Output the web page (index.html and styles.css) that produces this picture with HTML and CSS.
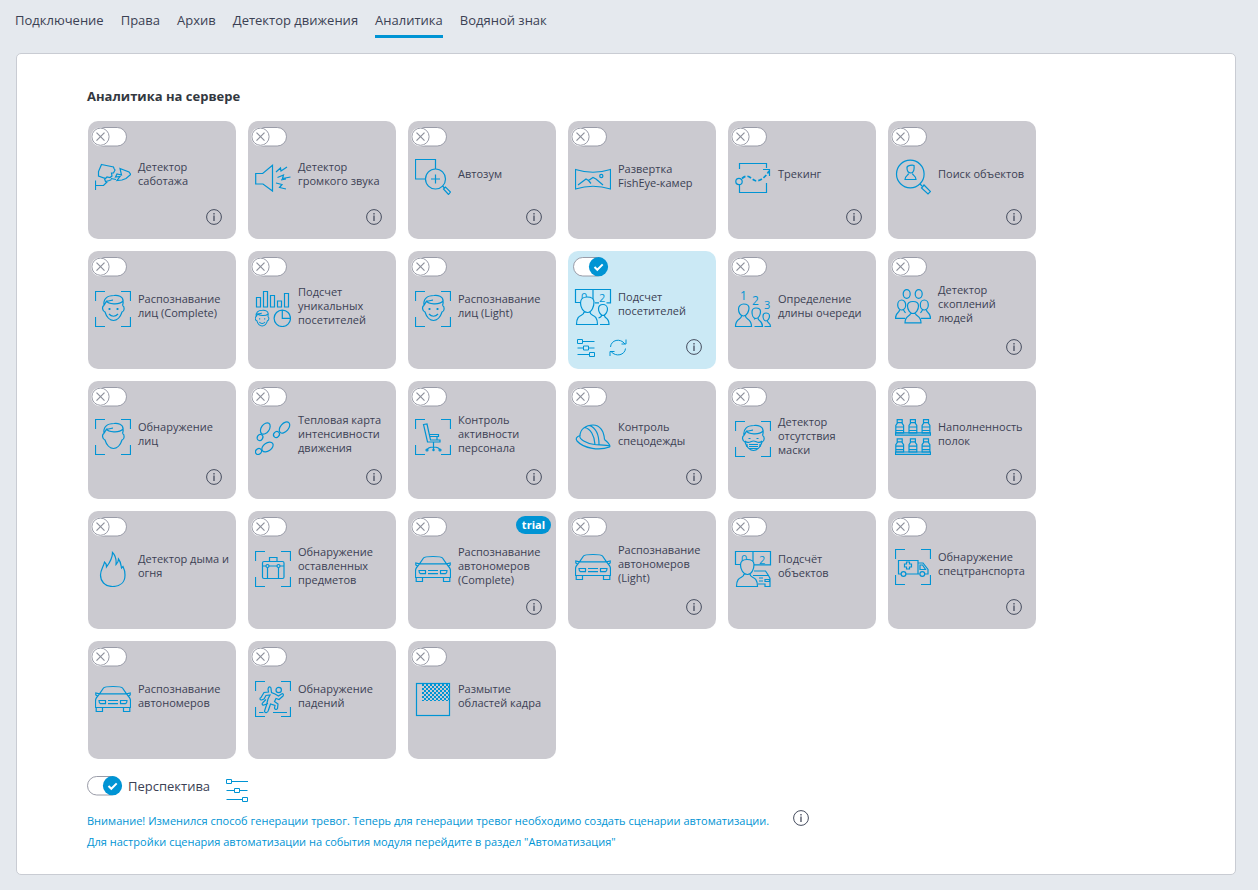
FILE: index.html
```html
<!DOCTYPE html>
<html lang="ru">
<head>
<meta charset="utf-8">
<meta name="viewport" content="width=device-width, initial-scale=1">
<title>Аналитика</title>
<link rel="stylesheet" href="styles.css">
</head>
<body>
<svg class="sprite" aria-hidden="true">
  <defs>
    <pattern id="checker" width="4" height="4" patternUnits="userSpaceOnUse" x="7" y="3">
      <path d="M0 0h2v2H0zM2 2h2v2H2z" fill="#0094d4" stroke="none"/>
    </pattern>
    <g id="corners"><path d="M.5 10V.5H10M26 .5h9.500V10M35.500 26v9.500H26M10 35.500H.5V26"/></g>
    <g id="hair"><path d="M9 14.500C8 8 12 4.500 19 4.500c4-.5 9 1 9 5 .5 2 0 3.500-.5 5M9 14.500l2.500-4.500c3.500 0 5-1 6.500-.8M11.500 10c1.500 3 12.500 4.500 16.500 0"/></g>
    <g id="jaw"><path d="M9 14.500c-2.500 1-1.500 6 1 6.500 1.500 5 5 8.500 8.500 8.500S25.500 26 27 21c2.500-.5 3-5.500.5-6.500"/></g>
    <g id="face"><use href="#hair"/><use href="#jaw"/><path d="M14.500 17v2M22.500 17v2" stroke-width="1.800"/><path d="M14 23c2.500 3 6.500 3 9 0"/></g>
  </defs>
  <symbol id="off" viewBox="0 0 38 20">
    <rect x="1.500" y=".5" width="34" height="18.500" rx="9.250" fill="#fff" stroke="#9a9ca8"/>
    <circle cx="9.500" cy="9.700" r="9.500" fill="#fff"/>
    <circle cx="9.500" cy="9.700" r="8.600" fill="#fff" stroke="#9a9ca8"/>
    <path d="M5.500 5.700l8 8M13.500 5.700l-8 8" stroke="#8d909c" stroke-width="1.200"/>
  </symbol>
  <symbol id="on" viewBox="0 0 38 20">
    <rect x="2.500" y=".5" width="33" height="18.500" rx="9.250" fill="#fff" stroke="#9a9ca8"/>
    <circle cx="27.500" cy="9.700" r="9.600" fill="#0094d4"/>
    <path d="M23.500 10l2.800 2.800 5.400-5.400" fill="none" stroke="#fff" stroke-width="2"/>
  </symbol>
  <symbol id="info" viewBox="0 0 16 16"><circle cx="8" cy="8" r="7.400"/><path d="M8 6.500V12M8 4v1.500" stroke-width="1.300"/></symbol>
  <symbol id="sliders" viewBox="0 0 18 18"><path d="M5.500 3.500H17.500M.5 10H6.500M11.500 10H17.500M.5 16.500h12M.5 1.500h5v4h-5zM6.500 8h5v4h-5zM12.500 14.500h5v4h-5z"/></symbol>
  <symbol id="sliders-large" viewBox="0 0 24 24"><path d="M6.500 3.500H23M1.500 12.500H9.500M14.500 12.500H22.500M1.500 21.500H17.500M1.500 1.500h5v4h-5zM9.500 10.500h5v4h-5zM17.500 19.500h5v4h-5z"/></symbol>
  <symbol id="refresh" viewBox="0 0 18 18"><path d="M1.500 9C2 2 11-.5 16 6M17 1.500V6H12.500M16.500 10.500C16 17 7 19.500 2 13.500M1 18v-4.500H5.500"/></symbol>

  <symbol id="sabotage" viewBox="0 0 36 36"><path d="M6.500 5.500L18.500 8l.5 1.500 1 1.500-1.500 3h-2l.5 3-2 1.500-3-.5-1.500 1.500L3.500 17V12.500zM25 9.500L34 13l1.700 2.500L31 19.500l-4 1.500-5 .5 3-4-4.500.5 1.500-3 4.500 1zM.5 21.500V31M.5 26.500h8l4-4M9 18.500l1.500 4 4-1 2-1M16 19.500l5 1"/></symbol>
  <symbol id="loud" viewBox="0 0 36 36"><path d="M.7 14.500h7l9.800-8.200V32L8 25H.7zM21 13l4.500-4 .5 3 6-4M22.500 18.500l6-2.500-1 3.500 8-1.500M21 24l6 1.500-2.500 3 6.500 1.500M26 21l5-1"/></symbol>
  <symbol id="autozoom" viewBox="0 0 36 36"><path d="M10.500 20H.5V.5h20V10"/><circle cx="20.500" cy="20" r="10"/><path d="M20.500 15.500v9M16 20h9M27.500 27l2 2M28.500 30l2-2 5 5-2 2.500z"/></symbol>
  <symbol id="fisheye" viewBox="0 0 36 36"><path d="M.5 8.500Q18 14 35.500 8.500V28Q18 22.500.5 28zM3 24l8-6 2.500 1.500L18 16.500l3 1.500 7 6M13.500 19.500l2.500 3"/><circle cx="26.300" cy="15" r="1.600"/></symbol>
  <symbol id="tracking" viewBox="0 0 36 36"><path d="M4.500 10V4.500h27V9M4.500 26v7.500h27V24"/><circle cx="4" cy="22.500" r="3.200"/><path d="M7 19.500C13 14 16 20 20 21.500S30 19 34 12" stroke-dasharray="4 2" stroke-width="1.700"/><path d="M28 10.500h6.500V17"/></symbol>
  <symbol id="search" viewBox="0 0 36 36"><circle cx="15.300" cy="15" r="13.800"/><path d="M25 25l2 2M26.500 29l2.500-3 6.500 6.500-2.500 2.500zM12 9c-.5-3 6-3 7-2.500.5 4-.5 7.500-3 7.500S12 12 12 9zM13.500 14.500c0 2-3.500 2-3.500 6h11c0-4-3.500-4-3.500-6"/></symbol>
  <symbol id="recognition" viewBox="0 0 36 36"><use href="#corners"/><use href="#face"/></symbol>
  <symbol id="unique" viewBox="0 0 36 36"><path d="M1.500 6.500H5.500v9.500H1.500zM8.500.5h4v15.500h-4zM15.500 4.500h4v11.500h-4zM22.500 10h4v6h-4zM29.500 2.500h4v13.500h-4z"/><circle cx="27.300" cy="27.300" r="8.200"/><path d="M27.300 19v8.300h8.200"/><g transform="translate(-4.500 16.500) scale(.63)" stroke-width="1.600"><use href="#face"/></g></symbol>
  <symbol id="crowd" viewBox="0 0 36 36"><ellipse cx="11.700" cy="5" rx="3.500" ry="4.300"/><ellipse cx="23.700" cy="5" rx="3.500" ry="4.300"/><ellipse cx="6.700" cy="16" rx="4" ry="5"/><ellipse cx="29.300" cy="16" rx="4" ry="5"/><path d="M12.500 17c0-3 2.500-4.500 5.500-4.500s5.500 1 5.500 4.500-2.500 7.500-5.500 7.500-5.500-4-5.500-7.500zM15.500 24.500c0 3-5.500 1.500-5.500 9.300h16c0-7.800-5.500-6.300-5.500-9.300M4.500 21c0 3-4 2-4 8.300H10M31.500 21c0 3 4 2 4 8.300H26M8.500 21l2 3M27.500 21l-2 3"/></symbol>
  <symbol id="detection" viewBox="0 0 36 36"><use href="#corners"/><use href="#hair"/><use href="#jaw"/></symbol>
  <symbol id="steps" viewBox="0 0 36 36"><ellipse cx="10.300" cy="9.500" rx="4" ry="6.300" transform="rotate(35 10.300 9.500)"/><ellipse cx="5" cy="18.500" rx="2.700" ry="3.200" transform="rotate(35 5 18.500)"/><ellipse cx="29.500" cy="8.500" rx="4" ry="6.500" transform="rotate(42 29.500 8.500)"/><ellipse cx="21.500" cy="15.500" rx="2.700" ry="3.200" transform="rotate(42 21.500 15.500)"/><ellipse cx="12.500" cy="28" rx="4" ry="6.300" transform="rotate(55 12.500 28)"/><ellipse cx="3.500" cy="32.500" rx="2.700" ry="3.200" transform="rotate(55 3.500 32.500)"/></symbol>
  <symbol id="staff" viewBox="0 0 36 36"><use href="#corners"/><path d="M8.500 5.500L12 5l3.500 16H25v2H12.500zM14 15.500h9.500v2H14.500M22 17.500V21M18.500 23v5M12 31c1-3 4-3 6.500-3s5.500 0 6.500 3M18.500 28v3"/><circle cx="12" cy="31" r="1"/><circle cx="18.500" cy="31" r=".6"/><circle cx="25" cy="31" r="1"/></symbol>
  <symbol id="helmet" viewBox="0 0 36 36"><path d="M5 17C5 10 11 6 18 6s11 6 11.500 14.500M5 16.500C1 18 .5 20 2 22c7 8 23 9.500 32.500 6 1-.5.5-3-5-7.500M5 17c-1 3 6 7.500 14.500 8.500 4 .5 12 .5 15 1.500M9.500 8.500c6 1 10 8 10.500 17M14.500 6.500C20 8.500 24 15 24 25.500"/></symbol>
  <symbol id="mask" viewBox="0 0 36 36"><use href="#corners"/><use href="#hair"/><use href="#jaw"/><path d="M10 20c3.500 3.500 5.500 0 8.500 0s5 3.500 8.500 0M14 23.500h9M14 25.500h9M14 27.500h9M13.500 17.500H15.500M21.500 17.500h2M12 23v3M25 23v3"/></symbol>
  <symbol id="shelves" viewBox="0 0 36 36"><g id="shelf"><g id="bottle"><path d="M2.200.7h5v3h-5zM2.700 3.700L.8 6.500v7.300h7.800V6.500L6.700 3.700M.8 8h7.800M.8 11.500h7.800"/></g><use href="#bottle" x="13.200"/><use href="#bottle" x="26.300"/><path d="M.5 13.800h35v2.400H.5z"/></g><use href="#shelf" y="19.200"/></symbol>
  <symbol id="fire" viewBox="0 0 36 36"><path d="M17.500 35.500C9.500 35.500 5.500 30 5.500 24c0-5 3-8 4-13 1.500 1 2 3 2 5 3-4 6-8 6-14.500 3 3 4 7 3.500 12 1.500-1.500 2.500-3 2.500-5.500 2.500 3 2.500 6 3 9l1.500-1.500c1.500 3 2 6 2 8.500 0 7-4.500 11.500-12.500 11.500z"/></symbol>
  <symbol id="luggage" viewBox="0 0 36 36"><use href="#corners"/><rect x="7.500" y="10.500" width="21.500" height="17" rx="1.500"/><path d="M14.500 10.500v-4h7.500v4M7.500 15h3.500M14 15h8M25 15h4M12.500 16.500v11M23.500 16.500v11"/><circle cx="12.500" cy="15" r="1.500"/><circle cx="23.500" cy="15" r="1.500"/></symbol>
  <symbol id="car" viewBox="0 0 36 36"><path d="M4.500 12.800L8.500 7Q9.500 5.500 18 5.500T27.500 7L31.500 12.800M4.500 12.800L.8 12v2l1.700 1M31.500 12.800l3.700-.8v2l-1.700 1M4.500 12.800h27L34 16q1.500 1.500 1.500 4v6.500H.5V20q0-2.500 1.500-4zM1.200 26.500v4h6.300v-4M28.500 26.500v4h6.300v-4M13 19.500h10M13 22.700h10M4 19.500h6.500v3.200H5.500Q4 22 4 19.500zM32 19.500h-6.500v3.200h5Q32 22 32 19.500z"/></symbol>
  <symbol id="ambulance" viewBox="0 0 36 36"><use href="#corners"/><path d="M6 25H3.500V11.500H23V25H11M23 14h5l5 6.500V25h-3M23 25h1.500M25 16h2.500l3 4.500H25zM11.500 13h3v2h2v3h-2v2h-3v-2h-2v-3h2z"/><circle cx="8.500" cy="25" r="2.400"/><circle cx="27.300" cy="25" r="2.400"/></symbol>
  <symbol id="fall" viewBox="0 0 36 36"><use href="#corners"/><circle cx="23.700" cy="9" r="2.700"/><path d="M13.500 6.500c1-1 2.500-.5 2.500 1l.5 4 3.500 1.500 3.500 2 3-2c1.500-1 2.500.5 1.500 2l-4 3.500-3-1-1.500 3 3.500 2.500-.5 4.500c-1 1.500-3 1-3-.5l.5-2.500-4.500-1.500-2 6c-.5 3-4 3.500-4 1l2-6 1.500-6 2-4-4 .5-2 3.500-2.500 1c-2 0-2-2-.5-2.500l3-5 4.500-.5-.5-3zM11 18.500l-3 3c-1.500 1-1 3 1 2.500l4-1.500M4 31.500h4.500M18 31.500h14"/></symbol>
  <symbol id="blur" viewBox="0 0 36 36"><rect x="1.500" y="2.500" width="33" height="32"/><rect x="7" y="3" width="27" height="17" fill="url(#checker)" stroke="none"/></symbol>
</svg>

<nav class="tabs">
  <a class="tab" href="#">Подключение</a>
  <a class="tab" href="#">Права</a>
  <a class="tab" href="#">Архив</a>
  <a class="tab" href="#">Детектор движения</a>
  <a class="tab tab-current" href="#" aria-current="page">Аналитика</a>
  <a class="tab" href="#">Водяной знак</a>
</nav>

<main class="panel">
  <h1 class="title">Аналитика на сервере</h1>
  <div class="tiles">
    <section class="tile"><label class="switch"><input type="checkbox" aria-labelledby="t1"><svg><use href="#off"/></svg></label><div class="body"><svg class="icon"><use href="#sabotage"/></svg><span class="name" id="t1">Детектор<br>саботажа</span></div><div class="tools"><button class="info" aria-label="Справка"><svg><use href="#info"/></svg></button></div></section>
    <section class="tile"><label class="switch"><input type="checkbox" aria-labelledby="t2"><svg><use href="#off"/></svg></label><div class="body"><svg class="icon"><use href="#loud"/></svg><span class="name" id="t2">Детектор<br>громкого звука</span></div><div class="tools"><button class="info" aria-label="Справка"><svg><use href="#info"/></svg></button></div></section>
    <section class="tile"><label class="switch"><input type="checkbox" aria-labelledby="t3"><svg><use href="#off"/></svg></label><div class="body"><svg class="icon"><use href="#autozoom"/></svg><span class="name" id="t3">Автозум</span></div><div class="tools"><button class="info" aria-label="Справка"><svg><use href="#info"/></svg></button></div></section>
    <section class="tile tile-low"><label class="switch"><input type="checkbox" aria-labelledby="t4"><svg><use href="#off"/></svg></label><div class="body"><svg class="icon"><use href="#fisheye"/></svg><span class="name" id="t4">Развертка<br>FishEye-камер</span></div></section>
    <section class="tile"><label class="switch"><input type="checkbox" aria-labelledby="t5"><svg><use href="#off"/></svg></label><div class="body"><svg class="icon"><use href="#tracking"/></svg><span class="name" id="t5">Трекинг</span></div><div class="tools"><button class="info" aria-label="Справка"><svg><use href="#info"/></svg></button></div></section>
    <section class="tile"><label class="switch"><input type="checkbox" aria-labelledby="t6"><svg><use href="#off"/></svg></label><div class="body"><svg class="icon"><use href="#search"/></svg><span class="name" id="t6">Поиск объектов</span></div><div class="tools"><button class="info" aria-label="Справка"><svg><use href="#info"/></svg></button></div></section>

    <section class="tile tile-low"><label class="switch"><input type="checkbox" aria-labelledby="t7"><svg><use href="#off"/></svg></label><div class="body"><svg class="icon"><use href="#recognition"/></svg><span class="name" id="t7">Распознавание<br>лиц (Complete)</span></div></section>
    <section class="tile tile-low"><label class="switch"><input type="checkbox" aria-labelledby="t8"><svg><use href="#off"/></svg></label><div class="body"><svg class="icon"><use href="#unique"/></svg><span class="name" id="t8">Подсчет<br>уникальных<br>посетителей</span></div></section>
    <section class="tile tile-low"><label class="switch"><input type="checkbox" aria-labelledby="t9"><svg><use href="#off"/></svg></label><div class="body"><svg class="icon"><use href="#recognition"/></svg><span class="name" id="t9">Распознавание<br>лиц (Light)</span></div></section>
    <section class="tile tile-active"><label class="switch"><input type="checkbox" checked aria-labelledby="t10"><svg><use href="#on"/></svg></label><div class="body"><svg class="icon" viewBox="0 0 36 36"><text x="6" y="12" font-size="11">0</text><text x="24" y="13" font-size="11">2</text><path d="M6 13.500H.5V.5h35v13.300h-4M18 .5v10M20 13.800h4"/><path class="patch" d="M5.500 14c0-4 3-6 6.500-6s7 1 7 5-2 10.500-6.500 10.500S5.500 18 5.500 14zM9 23c0 5-7.500 1-7.500 12.500h21C22.500 24 15 28 15 23M23.500 20c0-3 2-4.500 4.500-4.500s4.500 2 4.500 4.500-2 6.500-4.500 6.500-4.500-4-4.500-6.500zM26.500 26.500c0 1.500-1.500 2-3 2.500M29.500 26.500c0 3.500 4.500 1.500 4.500 9h-9"/></svg><span class="name" id="t10">Подсчет<br>посетителей</span></div><div class="tools"><button class="tool" aria-label="Настройки"><svg><use href="#sliders"/></svg></button><button class="tool" aria-label="Обновить"><svg><use href="#refresh"/></svg></button><button class="info" aria-label="Справка"><svg><use href="#info"/></svg></button></div></section>
    <section class="tile tile-low"><label class="switch"><input type="checkbox" aria-labelledby="t11"><svg><use href="#off"/></svg></label><div class="body"><svg class="icon" viewBox="0 0 36 36"><text x="5" y="9" font-size="12">1</text><text x="17" y="14" font-size="12">2</text><text x="29" y="18" font-size="11">3</text><path d="M3.500 18c0-3 2.500-5 5-5s5.500 1 5.500 4-2 8-5.500 8-5-4-5-7zM6.500 25c0 4-6 2-6 10.500h16c0-8.500-6-6.500-6-10.500M17 21c0-2.500 2-4 4-4s4.500 1 4.500 3.500-1.500 7-4.500 7-4-4-4-6.500zM23 27c0 3.500 4.500 2 4.500 8.500h-8M28 25c0-2 1.500-3 3-3s3.500 1 3.500 3-1.500 5-3.500 5-3-3-3-5zM32.500 30c0 2.500 3 1.500 3 5.500h-6M19.500 27v1.500"/></svg><span class="name" id="t11">Определение<br>длины очереди</span></div></section>
    <section class="tile"><label class="switch"><input type="checkbox" aria-labelledby="t12"><svg><use href="#off"/></svg></label><div class="body"><svg class="icon"><use href="#crowd"/></svg><span class="name" id="t12">Детектор<br>скоплений<br>людей</span></div><div class="tools"><button class="info" aria-label="Справка"><svg><use href="#info"/></svg></button></div></section>

    <section class="tile"><label class="switch"><input type="checkbox" aria-labelledby="t13"><svg><use href="#off"/></svg></label><div class="body"><svg class="icon"><use href="#detection"/></svg><span class="name" id="t13">Обнаружение<br>лиц</span></div><div class="tools"><button class="info" aria-label="Справка"><svg><use href="#info"/></svg></button></div></section>
    <section class="tile"><label class="switch"><input type="checkbox" aria-labelledby="t14"><svg><use href="#off"/></svg></label><div class="body"><svg class="icon"><use href="#steps"/></svg><span class="name" id="t14">Тепловая карта<br>интенсивности<br>движения</span></div><div class="tools"><button class="info" aria-label="Справка"><svg><use href="#info"/></svg></button></div></section>
    <section class="tile"><label class="switch"><input type="checkbox" aria-labelledby="t15"><svg><use href="#off"/></svg></label><div class="body"><svg class="icon"><use href="#staff"/></svg><span class="name" id="t15">Контроль<br>активности<br>персонала</span></div><div class="tools"><button class="info" aria-label="Справка"><svg><use href="#info"/></svg></button></div></section>
    <section class="tile"><label class="switch"><input type="checkbox" aria-labelledby="t16"><svg><use href="#off"/></svg></label><div class="body"><svg class="icon"><use href="#helmet"/></svg><span class="name" id="t16">Контроль<br>спецодежды</span></div><div class="tools"><button class="info" aria-label="Справка"><svg><use href="#info"/></svg></button></div></section>
    <section class="tile tile-low"><label class="switch"><input type="checkbox" aria-labelledby="t17"><svg><use href="#off"/></svg></label><div class="body"><svg class="icon"><use href="#mask"/></svg><span class="name" id="t17">Детектор<br>отсутствия<br>маски</span></div></section>
    <section class="tile"><label class="switch"><input type="checkbox" aria-labelledby="t18"><svg><use href="#off"/></svg></label><div class="body"><svg class="icon"><use href="#shelves"/></svg><span class="name" id="t18">Наполненность<br>полок</span></div><div class="tools"><button class="info" aria-label="Справка"><svg><use href="#info"/></svg></button></div></section>

    <section class="tile tile-low"><label class="switch"><input type="checkbox" aria-labelledby="t19"><svg><use href="#off"/></svg></label><div class="body"><svg class="icon"><use href="#fire"/></svg><span class="name" id="t19">Детектор дыма и<br>огня</span></div></section>
    <section class="tile tile-low"><label class="switch"><input type="checkbox" aria-labelledby="t20"><svg><use href="#off"/></svg></label><div class="body"><svg class="icon"><use href="#luggage"/></svg><span class="name" id="t20">Обнаружение<br>оставленных<br>предметов</span></div></section>
    <section class="tile tile-low"><span class="badge">trial</span><label class="switch"><input type="checkbox" aria-labelledby="t21"><svg><use href="#off"/></svg></label><div class="body"><svg class="icon"><use href="#car"/></svg><span class="name" id="t21">Распознавание<br>автономеров<br>(Complete)</span></div><div class="tools"><button class="info" aria-label="Справка"><svg><use href="#info"/></svg></button></div></section>
    <section class="tile"><label class="switch"><input type="checkbox" aria-labelledby="t22"><svg><use href="#off"/></svg></label><div class="body"><svg class="icon"><use href="#car"/></svg><span class="name" id="t22">Распознавание<br>автономеров<br>(Light)</span></div><div class="tools"><button class="info" aria-label="Справка"><svg><use href="#info"/></svg></button></div></section>
    <section class="tile tile-low"><label class="switch"><input type="checkbox" aria-labelledby="t23"><svg><use href="#off"/></svg></label><div class="body"><svg class="icon" viewBox="0 0 36 36"><text x="6" y="12" font-size="11">0</text><text x="24" y="13" font-size="11">2</text><path d="M6 13.500H.5V.5h35v13.300H19M18 .5v10M19 20h11.500l3 4.500M18 24.500h15.500l1.500 3v8h-5V33H23M24 27h4M30 28.500h4.500v2H30zM24 30h4"/><path class="patch" d="M5.500 14c0-4 3-5.500 6.500-5.500s7 1 7 5-2 10-6.500 10S5.500 18 5.500 14zM9 23c0 5-7.500 1-7.500 12.500h21C22.500 24 15 28 15 23"/></svg><span class="name" id="t23">Подсчёт<br>объектов</span></div></section>
    <section class="tile"><label class="switch"><input type="checkbox" aria-labelledby="t24"><svg><use href="#off"/></svg></label><div class="body"><svg class="icon"><use href="#ambulance"/></svg><span class="name" id="t24">Обнаружение<br>спецтранспорта</span></div><div class="tools"><button class="info" aria-label="Справка"><svg><use href="#info"/></svg></button></div></section>

    <section class="tile tile-low"><label class="switch"><input type="checkbox" aria-labelledby="t25"><svg><use href="#off"/></svg></label><div class="body"><svg class="icon"><use href="#car"/></svg><span class="name" id="t25">Распознавание<br>автономеров</span></div></section>
    <section class="tile tile-low"><label class="switch"><input type="checkbox" aria-labelledby="t26"><svg><use href="#off"/></svg></label><div class="body"><svg class="icon"><use href="#fall"/></svg><span class="name" id="t26">Обнаружение<br>падений</span></div></section>
    <section class="tile tile-low"><label class="switch"><input type="checkbox" aria-labelledby="t27"><svg><use href="#off"/></svg></label><div class="body"><svg class="icon"><use href="#blur"/></svg><span class="name" id="t27">Размытие<br>областей кадра</span></div></section>
  </div>

  <div class="perspective">
    <label class="switch switch-inline"><input type="checkbox" checked aria-labelledby="persp"><svg><use href="#on"/></svg></label>
    <span class="perspective-name" id="persp">Перспектива</span>
    <button class="tool tool-large" aria-label="Настройки перспективы"><svg><use href="#sliders-large"/></svg></button>
  </div>
  <div class="notice">
    <div class="notice-text">
      <p>Внимание! Изменился способ генерации тревог. Теперь для генерации тревог необходимо создать сценарии автоматизации.</p>
      <p>Для настройки сценария автоматизации на события модуля перейдите в раздел "Автоматизация"</p>
    </div>
    <button class="info" aria-label="Справка"><svg><use href="#info"/></svg></button>
  </div>
</main>
</body>
</html>
```

FILE: styles.css
```css
* { box-sizing: border-box; }

body {
  margin: 0;
  background: #e5e9ee;
  color: #3b4154;
  font-family: "Open Sans", "Noto Sans", sans-serif;
  font-size: 11px;
}

.sprite { position: absolute; width: 0; height: 0; }

.tabs {
  display: flex;
  gap: 17px;
  height: 53px;
  padding: 10px 15px 0;
}
.tab {
  height: 28px;
  color: inherit;
  font-size: 13px;
  line-height: 20px;
  text-decoration: none;
  white-space: nowrap;
}
.tab-current { border-bottom: 3px solid #0094d4; }

.panel {
  margin: 0 22px 15px 16px;
  padding: 32px 70px 22px;
  background: #fff;
  border: 1px solid #c9ccd3;
  border-radius: 5px;
}
.title {
  margin: 0 0 14px;
  color: #33383f;
  font-size: 13px;
  font-weight: 700;
  line-height: 21px;
}

.tiles {
  display: grid;
  grid-template-columns: repeat(auto-fill, 148px);
  gap: 12px;
  padding-left: 1px;
}
.tile {
  position: relative;
  display: flex;
  flex-direction: column;
  min-height: 118px;
  background: #cbcad0;
  border-radius: 10px;
}
.tile-active { background: #cbe9f5; }

.switch {
  display: grid;
  width: 38px;
  margin: 6px 3px;
}
.switch input,
.switch svg {
  grid-area: 1 / 1;
  width: 38px;
  height: 20px;
  margin: 0;
}
.switch input { appearance: none; }
.switch svg { pointer-events: none; }
.switch-inline { margin: 0; }

.body {
  display: flex;
  align-items: center;
  gap: 7px;
  height: 48px;
  padding-left: 7px;
}
.tile-low .body { margin-top: 2px; }
.icon {
  flex: none;
  width: 36px;
  height: 36px;
  fill: none;
  stroke: #0094d4;
  stroke-width: 1.2;
  overflow: visible;
}
.icon text { fill: #0094d4; stroke: none; }
.patch { fill: #cbcad0; }
.tile-active .patch { fill: #cbe9f5; }
.name {
  padding-bottom: 6px;
  line-height: 14px;
  white-space: nowrap;
}

.tools {
  display: flex;
  align-items: center;
  gap: 14px;
  min-height: 31px;
  margin-top: auto;
  padding: 0 14px 13px 9px;
}
button {
  display: flex;
  padding: 0;
  border: 0;
  background: none;
  cursor: pointer;
}
button svg { width: 18px; height: 18px; fill: none; overflow: visible; }
.info { margin-left: auto; }
.info svg { width: 16px; height: 16px; stroke: #454c5e; }
.tool svg { stroke: #0094d4; }
.tool-large svg { width: 24px; height: 24px; }
.tool symbol { overflow: visible; }
#sliders, #refresh { overflow: visible; }

.badge {
  position: absolute;
  top: 5px;
  right: 5px;
  padding: 0 6px;
  border-radius: 9px;
  background: #0094d4;
  color: #fff;
  font-size: 11px;
  font-weight: 700;
  line-height: 18px;
}

.perspective {
  display: flex;
  align-items: flex-start;
  gap: 5px;
  margin-top: 17px;
}
.perspective .switch { margin-left: -2px; }
.perspective-name { font-size: 13px; line-height: 20px; }
.tool-large { margin: 2px 0 0 10px; }

.notice {
  display: flex;
  gap: 24px;
  margin-top: 8px;
  color: #0094d4;
}
.notice p { margin: 0; line-height: 21px; }
.notice .info { margin: 0; align-self: flex-start; }
```
